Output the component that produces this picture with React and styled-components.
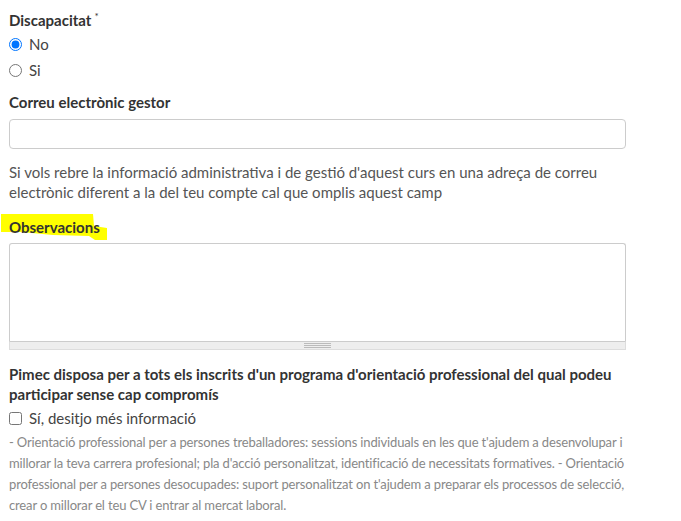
import styled, { createGlobalStyle } from "styled-components";

const Global = createGlobalStyle`
  body {
    margin: 0;
    background: #fff;
    font-family: Lato, "Open Sans", sans-serif;
    color: #333;
  }
`;

const Form = styled.div`
  width: 617px;
  padding: 6px 0 0 9px;
`;

const Label = styled.div`
  position: relative;
  font-size: 15px;
  font-weight: bold;
  color: #333;
  line-height: 20px;
  margin-top: ${(p) => p.$top || 0}px;
`;

const Star = styled.sup`
  font-size: 10px;
  font-weight: normal;
  vertical-align: 6px;
  margin-left: 3px;
`;

const Options = styled.div`
  margin-top: 1px;
`;

const Option = styled.label`
  display: flex;
  align-items: center;
  gap: 7px;
  height: 26px;
  font-size: 15px;
  color: #444;
  margin-top: ${(p) => p.$top || 0}px;
  input {
    margin: 0;
    width: 13px;
    height: 13px;
  }
`;

const TextInput = styled.input`
  display: block;
  box-sizing: border-box;
  width: 617px;
  height: 30px;
  margin-top: 7px;
  border: 1px solid #ccc;
  border-radius: 4px;
`;

const Help = styled.p`
  margin: 13px 0 0;
  font-size: 15px;
  line-height: 20px;
  color: #555;
`;

const Highlight = styled.svg`
  position: absolute;
  left: -8px;
  top: -6px;
  z-index: -1;
`;

const AreaBox = styled.div`
  width: 617px;
  margin-top: 6px;
`;

const Area = styled.textarea`
  display: block;
  box-sizing: border-box;
  width: 617px;
  height: 98px;
  margin: 0;
  border: 1px solid #ccc;
  border-bottom: none;
  border-radius: 3px 3px 0 0;
  resize: none;
`;

const Grip = styled.div`
  box-sizing: border-box;
  height: 9px;
  background: #eee;
  border: 1px solid #ddd;
  border-top-color: #ccc;
  display: flex;
  align-items: center;
  justify-content: center;
  &::after {
    content: "";
    width: 27px;
    height: 5px;
    border-top: 1px solid #bbb;
    border-bottom: 1px solid #bbb;
    box-sizing: border-box;
    background: linear-gradient(#bbb, #bbb) center / 100% 1px no-repeat;
  }
`;

const Small = styled.p`
  margin: 1px 0 0;
  font-size: 13px;
  letter-spacing: -0.15px;
  line-height: 21px;
  color: #888;
`;

export default function App() {
  return (
    <Form>
      <Global />
      <Label>
        Discapacitat<Star>*</Star>
      </Label>
      <Options>
        <Option>
          <input type="radio" name="disc" defaultChecked /> No
        </Option>
        <Option>
          <input type="radio" name="disc" /> Si
        </Option>
      </Options>
      <Label $top={9}>Correu electrònic gestor</Label>
      <TextInput type="text" />
      <Help>
        Si vols rebre la informació administrativa i de gestió d'aquest curs en
        una adreça de correu electrònic diferent a la del teu compte cal que
        omplis aquest camp
      </Help>
      <Label $top={15} style={{ isolation: "isolate" }}>
        <Highlight width="112" height="31" viewBox="0 0 112 31">
          <path
            d="M0 3 L92 3 L93 15 L106 17 L106 29 L94 29 L88 25 L52 24 L20 21 L0 21 Z"
            fill="#ffff00"
          />
        </Highlight>
        Observacions
      </Label>
      <AreaBox>
        <Area />
        <Grip />
      </AreaBox>
      <Label $top={14}>
        Pimec disposa per a tots els inscrits d'un programa d'orientació
        professional del qual podeu participar sense cap compromís
      </Label>
      <Option $top={1}>
        <input type="checkbox" /> Sí, desitjo més informació
      </Option>
      <Small>
        - Orientació professional per a persones treballadores: sessions
        individuals en les que t'ajudem a desenvolupar i millorar la teva
        carrera profesional; pla d'acció personalitzat, identificació de
        necessitats formatives. - Orientació professional per a persones
        desocupades: suport personalitzat on t'ajudem a preparar els processos
        de selecció, crear o millorar el teu CV i entrar al mercat laboral.
      </Small>
    </Form>
  );
}
